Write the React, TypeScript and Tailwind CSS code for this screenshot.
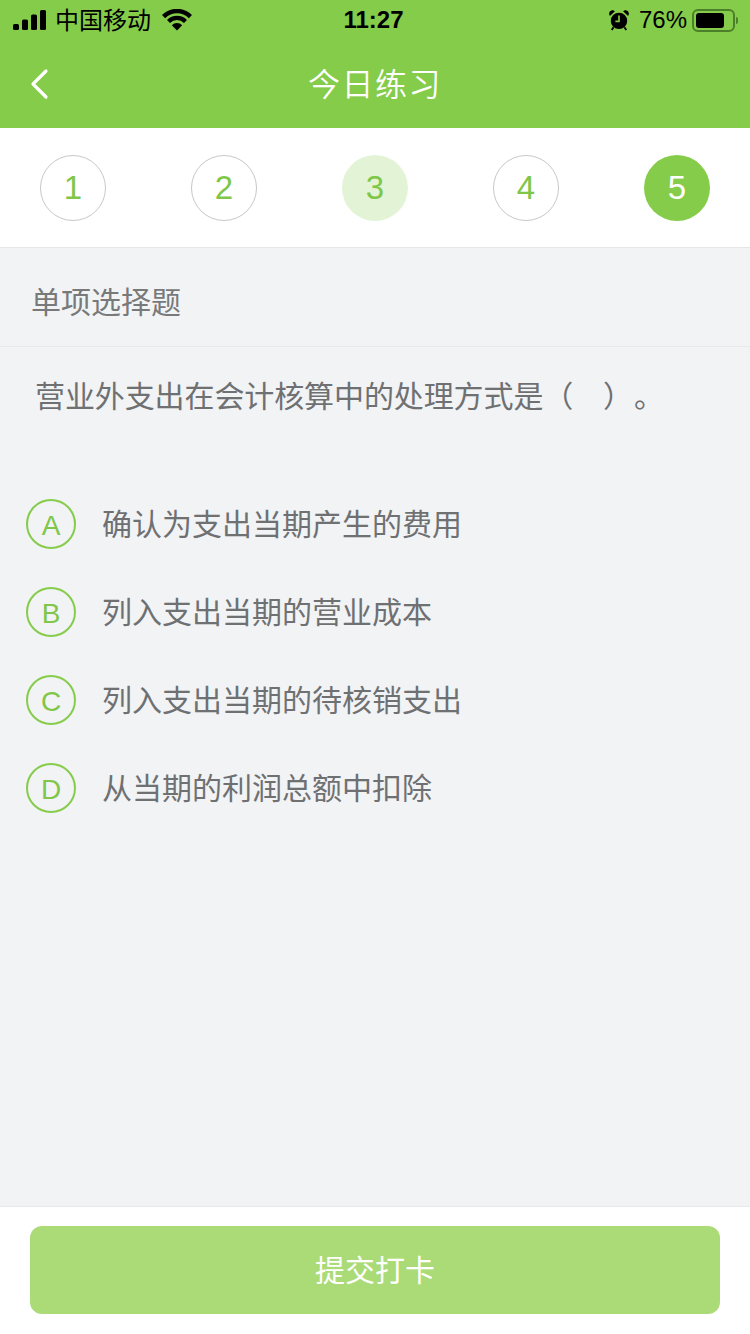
import React from 'react';

const cjk = "font-['Noto_Sans_CJK_SC',sans-serif]";
const latin = "font-['Liberation_Sans',sans-serif]";

const steps = [
  { label: '1', cls: 'border border-[#c8c8c8] bg-white text-[#80c648]' },
  { label: '2', cls: 'border border-[#c8c8c8] bg-white text-[#80c648]' },
  { label: '3', cls: 'bg-[#e3f4d6] text-[#80c648]' },
  { label: '4', cls: 'border border-[#c8c8c8] bg-white text-[#80c648]' },
  { label: '5', cls: 'bg-[#85cc4a] text-white' },
];

const options = [
  { key: 'A', text: '确认为支出当期产生的费用' },
  { key: 'B', text: '列入支出当期的营业成本' },
  { key: 'C', text: '列入支出当期的待核销支出' },
  { key: 'D', text: '从当期的利润总额中扣除' },
];

const StatusBar = () => (
  <div className="flex h-10 items-center justify-between pl-[13px] pr-[12px] text-black">
    <div className="flex flex-1 items-center">
      {/* signal */}
      <svg width="34" height="20" viewBox="0 0 34 20" fill="#000">
        <rect x="0" y="14" width="6" height="6" rx="1.5" />
        <rect x="9" y="9.5" width="6" height="10.5" rx="1.5" />
        <rect x="18" y="4.500" width="6" height="15.5" rx="1.5" />
        <rect x="27" y="0" width="6" height="20" rx="1.5" />
      </svg>
      <span className={`ml-[8px] pb-[2px] text-[24px] leading-none ${cjk}`}>中国移动</span>
      {/* wifi */}
      <svg className="ml-[11px]" width="30" height="22" viewBox="0 0 30 22" fill="none">
        <path d="M1.600 7.600a19 19 0 0 1 26.800 0" stroke="#000" strokeWidth="4.500" />
        <path d="M6.500 12.500a12 12 0 0 1 17 0" stroke="#000" strokeWidth="4.200" />
        <path d="M9.800 16.200a7.400 7.400 0 0 1 10.400 0L15 21.500z" fill="#000" />
      </svg>
    </div>
    <span className={`pr-[4px] text-[24px] font-bold leading-none ${latin}`}>11:27</span>
    <div className="flex flex-1 items-center justify-end">
      {/* alarm */}
      <svg width="20" height="22" viewBox="0 0 22 24" fill="#000">
        <circle cx="11" cy="13" r="9" />
        <path d="M1 7.500 6.500 2.500 4 1 1 2.500 0 5zM21 7.500 15.500 2.500 18 1l3 1.500L22 5z" />
        <path d="M5 20l-2 3M17 20l2 3" stroke="#000" strokeWidth="2" />
        <path d="M11 7V13.500H7" stroke="#85cc4a" strokeWidth="1.800" fill="none" />
      </svg>
      <span className={`ml-[10px] text-[24px] leading-none ${latin}`}>76%</span>
      <div className="relative ml-[5px] mr-[3px] flex h-[23px] w-[43px] items-center rounded-[6px] border-2 border-[#4c7f2a] p-[2px]">
        <div className="h-[15px] w-[28px] rounded-[3px] bg-black" />
        <div className="absolute -right-[5px] top-[6px] h-[7px] w-[2px] rounded-r-sm bg-[#4c7f2a]" />
      </div>
    </div>
  </div>
);

export default function App() {
  return (
    <div className={`flex h-[1334px] w-[750px] flex-col overflow-hidden bg-[#f2f3f5] ${cjk}`}>
      <div className="h-[128px] bg-[#85cc4a]">
        <StatusBar />
        <div className="relative flex h-[88px] items-center justify-center pb-[4px]">
          <svg className="absolute left-[28px] top-[28px]" width="22" height="32" viewBox="0 0 22 32" fill="none">
            <path d="M18 3 5 16l13 13" stroke="#fff" strokeWidth="3.200" strokeLinecap="round" strokeLinejoin="round" />
          </svg>
          <span className="text-[32px] font-[350] leading-none tracking-[1.500px] text-white">今日练习</span>
        </div>
      </div>

      <div className="flex h-[120px] items-center justify-between border-b border-[#e6e6e6] bg-white px-[40px]">
        {steps.map((s) => (
          <div
            key={s.label}
            className={`flex h-[66px] w-[66px] items-center justify-center rounded-full text-[33px] ${latin} ${s.cls}`}
          >
            {s.label}
          </div>
        ))}
      </div>

      <div className="flex h-[99px] items-center border-b border-[#e8e9eb] pl-[31px] pt-[6px] text-[30px] leading-none text-[#77797b]">
        单项选择题
      </div>

      <div className="pl-[35px] pt-[27px] text-[30px] leading-[40px] tracking-[-0.1px] text-[#6e7072]">
        营业外支出在会计核算中的处理方式是（　）<span className="ml-[16px]">。</span>
      </div>

      <div className="mt-[85px] flex flex-col gap-[38px] pl-[26px]">
        {options.map((o) => (
          <div key={o.key} className="flex h-[50px] items-center">
            <div
              className={`flex h-[50px] w-[50px] items-center justify-center rounded-full border-2 border-[#85cc4a] pt-[3px] text-[28px] leading-none text-[#80c648] ${latin}`}
            >
              {o.key}
            </div>
            <span className="ml-[26px] pb-[4px] text-[30px] leading-none text-[#6e7072]">{o.text}</span>
          </div>
        ))}
      </div>

      <div className="mt-auto flex h-[128px] items-start border-t border-[#e8e9eb] bg-white px-[30px] pt-[19px]">
        <div className="flex h-[88px] w-full items-center justify-center rounded-[12px] bg-[#aadb77] pb-[4px] text-[30px] leading-none text-white">
          提交打卡
        </div>
      </div>
    </div>
  );
}
